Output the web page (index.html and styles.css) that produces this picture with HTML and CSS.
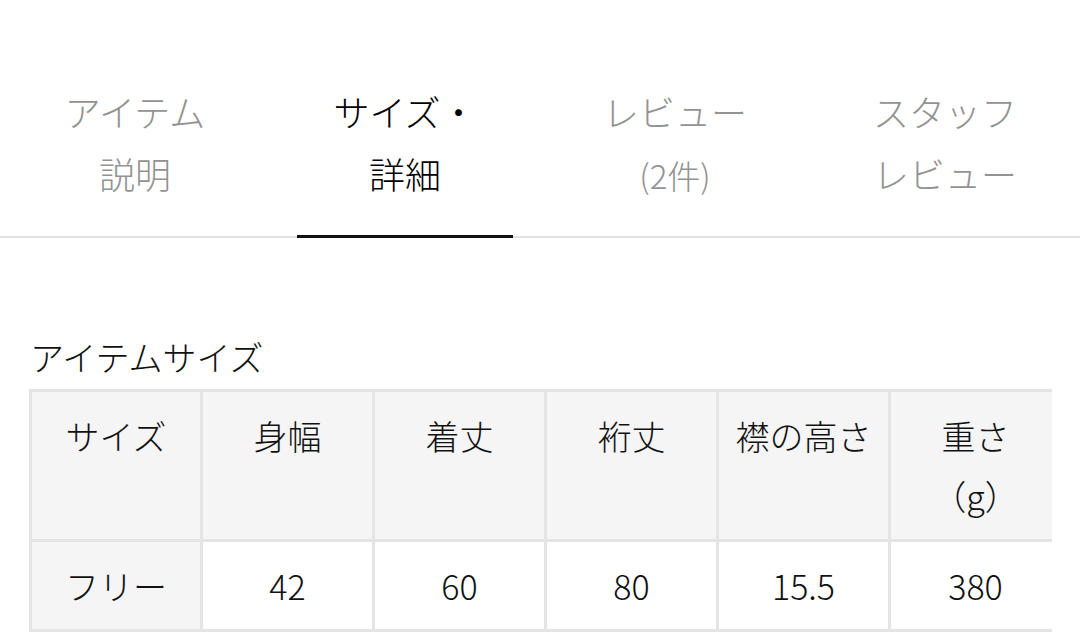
FILE: index.html
```html
<!DOCTYPE html>
<html lang="ja">
<head>
<meta charset="utf-8">
<title>サイズ・詳細</title>
<link rel="stylesheet" href="styles.css">
</head>
<body>
<nav class="tabs">
  <div class="tab">アイテム<br>説明</div>
  <div class="tab tab-active">サイズ・<br>詳細</div>
  <div class="tab">レビュー<br><span class="count">(2件)</span></div>
  <div class="tab">スタッフ<br>レビュー</div>
</nav>
<section class="size-section">
  <h2 class="size-title">アイテムサイズ</h2>
  <div class="size-wrap">
    <div class="size-grid">
      <div class="cell cell-head">サイズ</div>
      <div class="cell cell-head">身幅</div>
      <div class="cell cell-head">着丈</div>
      <div class="cell cell-head">裄丈</div>
      <div class="cell cell-head">襟の高さ</div>
      <div class="cell cell-head">重さ<br>（g）</div>
      <div class="cell cell-head">フリー</div>
      <div class="cell">42</div>
      <div class="cell">60</div>
      <div class="cell">80</div>
      <div class="cell">15.5</div>
      <div class="cell">380</div>
    </div>
  </div>
</section>
</body>
</html>
```

FILE: styles.css
```css
html, body {
  margin: 0;
  padding: 0;
  background: #ffffff;
}

body {
  font-family: "Noto Sans CJK JP", "Noto Sans", sans-serif;
  font-weight: 300;
  color: #111111;
  width: 1080px;
  height: 638px;
  overflow: hidden;
}

.tabs {
  display: flex;
  padding-top: 80px;
  border-bottom: 2px solid #e2e2e2;
}

.tab {
  position: relative;
  flex: 1 1 0;
  text-align: center;
  font-size: 36px;
  line-height: 62px;
  color: #939393;
  padding-bottom: 30px;
}

.tab .count {
  font-size: 33px;
}

.tab-active {
  color: #000000;
}

.tab-active::after {
  content: "";
  position: absolute;
  left: 27px;
  right: 27px;
  bottom: -2px;
  height: 3px;
  background: #111111;
}

.size-section {
  padding: 93px 0 0 29px;
}

.size-title {
  margin: 0 0 7px 1px;
  font-size: 34px;
  font-weight: 300;
  line-height: 51px;
  color: #111111;
}

.size-wrap {
  width: 1023px;
  overflow: hidden;
}

.size-grid {
  display: grid;
  grid-template-columns: 168px repeat(5, 169px);
  gap: 3px;
  padding: 3px;
  background: #e4e4e4;
  width: max-content;
}

.cell {
  background: #ffffff;
  padding: 14px 10px 13px;
  font-size: 34px;
  line-height: 60px;
  text-align: center;
}

.cell-head,
.cell:nth-child(7) {
  background: #f5f5f5;
}
```
